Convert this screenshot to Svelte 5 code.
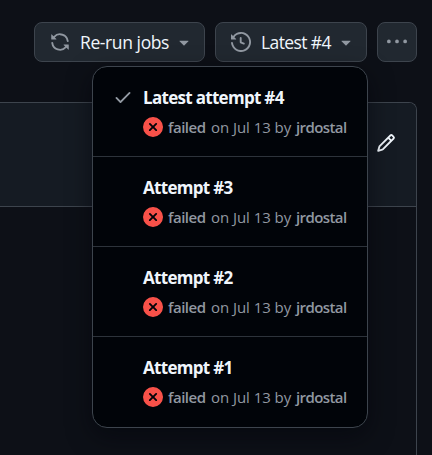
<script>
  const attempts = ['Latest attempt #4', 'Attempt #3', 'Attempt #2', 'Attempt #1'];

  const icons = {
    sync: 'M1.705 8.005a.75.75 0 0 1 .834.656 5.5 5.5 0 0 0 9.592 2.97l-1.204-1.204a.25.25 0 0 1 .177-.427h3.646a.25.25 0 0 1 .25.25v3.646a.25.25 0 0 1-.427.177l-1.38-1.38A7.002 7.002 0 0 1 1.05 8.84a.75.75 0 0 1 .656-.834ZM8 2.5a5.487 5.487 0 0 0-4.131 1.869l1.204 1.204A.25.25 0 0 1 4.896 6H1.25A.25.25 0 0 1 1 5.75V2.104a.25.25 0 0 1 .427-.177l1.38 1.38A7.002 7.002 0 0 1 14.95 7.16a.75.75 0 0 1-1.49.178A5.5 5.5 0 0 0 8 2.5Z',
    history: 'm.427 1.927 1.215 1.215a8.002 8.002 0 1 1-1.6 5.685.75.75 0 1 1 1.493-.154 6.5 6.5 0 1 0 1.18-4.458l1.358 1.358A.25.25 0 0 1 3.896 6H.25A.25.25 0 0 1 0 5.75V2.104a.25.25 0 0 1 .427-.177ZM7.75 4a.75.75 0 0 1 .75.75v2.992l2.028.812a.75.75 0 0 1-.557 1.392l-2.5-1A.751.751 0 0 1 7 8.25v-3.5A.75.75 0 0 1 7.75 4Z',
    caret: 'm4.427 7.427 3.396 3.396a.25.25 0 0 0 .354 0l3.396-3.396A.25.25 0 0 0 11.396 7H4.604a.25.25 0 0 0-.177.427Z',
    dots: 'M8 9a1.5 1.5 0 1 0 0-3 1.5 1.5 0 0 0 0 3ZM1.5 9a1.5 1.5 0 1 0 0-3 1.5 1.5 0 0 0 0 3Zm13 0a1.5 1.5 0 1 0 0-3 1.5 1.5 0 0 0 0 3Z',
    check: 'M13.78 4.22a.75.75 0 0 1 0 1.06l-7.25 7.25a.75.75 0 0 1-1.06 0L2.22 9.28a.751.751 0 0 1 .018-1.042.751.751 0 0 1 1.042-.018L6 10.94l6.72-6.72a.75.75 0 0 1 1.06 0Z',
    failed: 'M2.343 13.657A8 8 0 1 1 13.658 2.343 8 8 0 0 1 2.343 13.657ZM6.03 4.97a.751.751 0 0 0-1.042.018.751.751 0 0 0-.018 1.042L6.94 8 4.97 9.97a.749.749 0 0 0 .326 1.275.749.749 0 0 0 .734-.215L8 9.06l1.97 1.97a.749.749 0 0 0 1.275-.326.749.749 0 0 0-.215-.734L9.06 8l1.97-1.97a.749.749 0 0 0-.326-1.275.749.749 0 0 0-.734.215L8 6.94Z',
    pencil: 'M11.013 1.427a1.75 1.75 0 0 1 2.474 0l1.086 1.086a1.75 1.75 0 0 1 0 2.474l-8.61 8.61c-.21.21-.47.364-.756.445l-3.251.93a.75.75 0 0 1-.927-.928l.929-3.25c.081-.286.235-.547.445-.758l8.61-8.61Zm.176 4.823L9.75 4.81l-6.286 6.287a.253.253 0 0 0-.064.108l-.558 1.953 1.953-.558a.253.253 0 0 0 .108-.064Zm1.238-3.763a.25.25 0 0 0-.354 0L10.811 3.75l1.439 1.44 1.263-1.263a.25.25 0 0 0 0-.354Z'
  };
</script>

{#snippet icon(name)}
  <svg class={name} width="20" height="20" viewBox="0 0 16 16" fill="currentColor" aria-hidden="true"><path d={icons[name]} /></svg>
{/snippet}

<div class="page">
  <header class="toolbar">
    <button class="rerun">{@render icon('sync')}<span>Re-run jobs</span>{@render icon('caret')}</button>
    <button class="latest">{@render icon('history')}<span>Latest #4</span>{@render icon('caret')}</button>
    <button class="more" aria-label="More options">{@render icon('dots')}</button>
  </header>
  <section class="card">
    <div class="card-head">{@render icon('pencil')}</div>
  </section>
  <ul class="menu">
    {#each attempts as title, i}
      <li>
        <div class="mark">{#if i === 0}{@render icon('check')}{/if}</div>
        <div class="body">
          <div class="title">{title}</div>
          <div class="meta">
            {@render icon('failed')}
            <b class="status">failed</b><span class="date">on Jul 13 by</span><b class="user">jrdostal</b>
          </div>
        </div>
      </li>
    {/each}
  </ul>
</div>

<style>
  :global(body) { background: #0d1017; overflow: hidden; }
  * { box-sizing: border-box; }
  svg { display: block; flex: none; }
  .page {
    position: relative;
    display: flex;
    flex-direction: column;
    width: 432px;
    height: 455px;
    overflow: hidden;
    background: #0d1017;
    font-family: "Open Sans", "Noto Sans", sans-serif;
  }
  .toolbar {
    display: flex;
    justify-content: flex-end;
    gap: 10px;
    padding: 22px 15px 40px 0;
  }
  button {
    display: flex;
    align-items: center;
    height: 40px;
    padding: 0 10px 0 15px;
    border: 1px solid #3d444d;
    border-radius: 8px;
    background: #212830;
    color: #9198a1;
    font: 400 17.5px/26px "Open Sans", "Noto Sans", sans-serif;
  }
  button span {
    flex: 1;
    padding-left: 10px;
    text-align: left;
    white-space: nowrap;
    color: #f0f6fc;
    letter-spacing: -0.4px;
  }
  .rerun { width: 171px; }
  .latest { width: 152px; }
  .latest span { letter-spacing: -0.6px; }
  .more { width: 40px; padding: 0; justify-content: center; }
  .card {
    flex: 1;
    width: 417px;
    border: solid #3d444d;
    border-width: 1px 1px 0 0;
    border-radius: 0 8px 0 0;
  }
  .card-head {
    display: flex;
    justify-content: flex-end;
    height: 104px;
    padding: 30px 20px 0 0;
    border-bottom: 1px solid #3d444d;
    border-radius: 0 7px 0 0;
    background: #151b23;
    color: #f0f6fc;
  }
  .menu {
    position: absolute;
    left: 92px;
    top: 66px;
    width: 276px;
    height: 362px;
    margin: 0;
    padding: 0;
    list-style: none;
    overflow: hidden;
    border: 1px solid #3d444d;
    border-radius: 15px;
    background: #010409;
    box-shadow: 0 8px 24px rgba(1, 4, 9, 0.5);
  }
  li {
    display: flex;
    height: 90px;
    padding: 18px 0 0 20px;
    border-bottom: 1px solid #2d333b;
  }
  li:last-child { border-bottom: 0; }
  .mark { width: 30px; padding-top: 2px; color: #9198a1; }
  .title {
    color: #f0f6fc;
    font-size: 17px;
    font-weight: 700;
    line-height: 25px;
    letter-spacing: -0.7px;
    white-space: nowrap;
  }
  .meta {
    display: flex;
    align-items: center;
    height: 20px;
    margin-top: 7px;
    color: #9198a1;
    font-size: 15px;
    line-height: 20px;
    white-space: nowrap;
  }
  .meta b { font-weight: 600; }
  .failed { color: #f85149; }
  .status { width: 43px; margin-left: 5px; letter-spacing: -0.5px; }
  .date { width: 85px; letter-spacing: -0.05px; }
  .user { letter-spacing: -0.6px; }
</style>
